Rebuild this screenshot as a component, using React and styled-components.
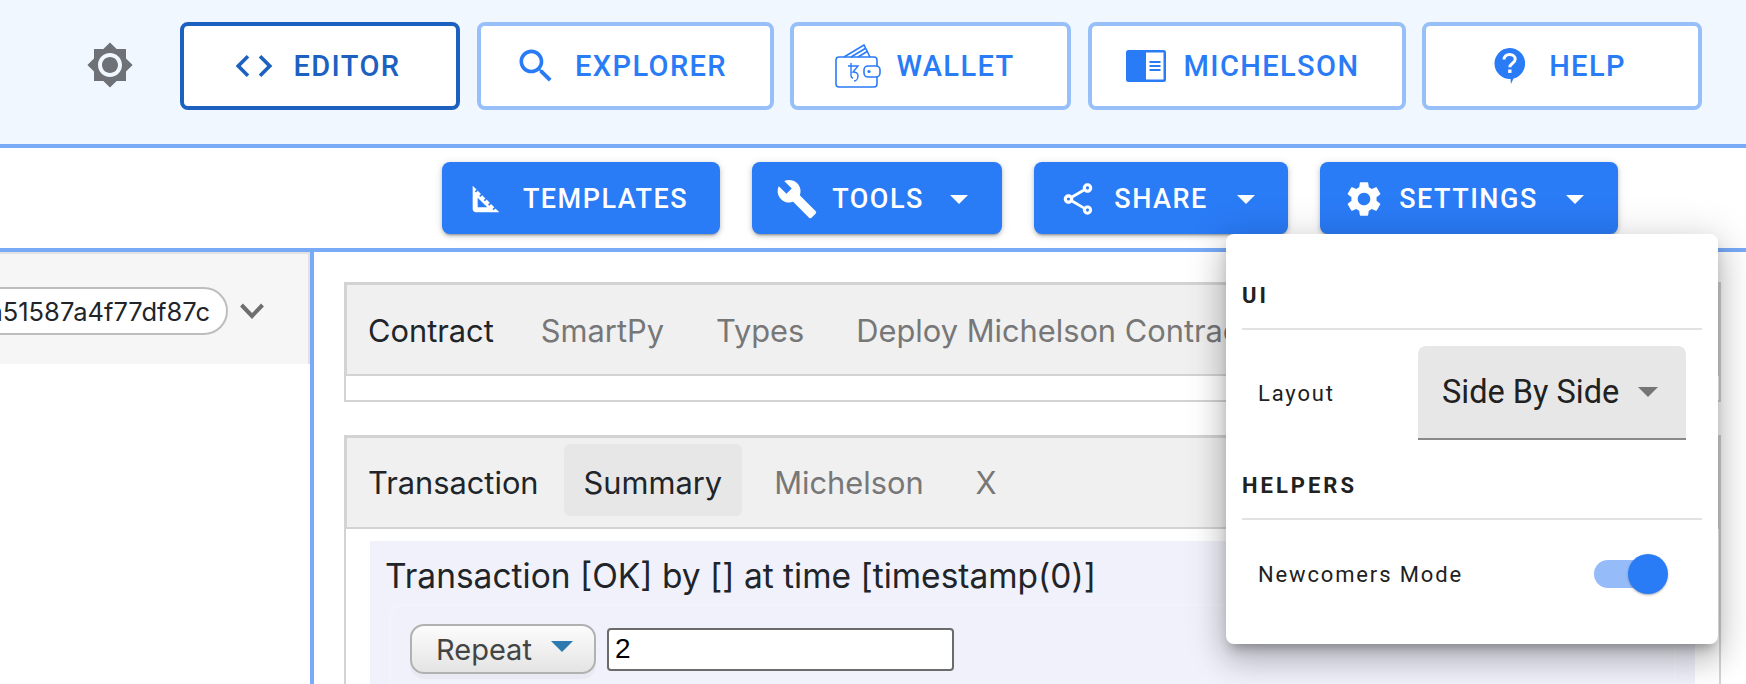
import React from "react";
import styled, { createGlobalStyle } from "styled-components";

const GlobalStyle = createGlobalStyle`
  html, body {
    margin: 0;
    height: 100%;
    overflow: hidden;
    background: #fff;
    font-family: Roboto, "Liberation Sans", sans-serif;
  }
  #root { height: 100%; }
`;

const Page = styled.div`
  height: 684px;
  overflow: hidden;
  display: flex;
  flex-direction: column;
`;

/* top nav */
const Header = styled.header`
  flex: none;
  height: 148px;
  box-sizing: border-box;
  display: flex;
  align-items: flex-start;
  justify-content: flex-end;
  gap: 16.5px;
  padding: 22px 44px 0 0;
  background: #f0f7ff;
  border-bottom: 4px solid #78aaf7;
`;

const ThemeToggle = styled.span`
  display: flex;
  margin: 19px 30px 0 0;
  color: #6e7175;
`;

const NavButton = styled.a`
  width: ${(p) => p.$w}px;
  height: 88px;
  box-sizing: border-box;
  display: flex;
  align-items: center;
  justify-content: center;
  gap: ${(p) => p.$gap || 18}px;
  padding-right: ${(p) => p.$shift || 8}px;
  background: #fff;
  border: 4px solid ${(p) => (p.$active ? "#1c60c0" : "#98c0f8")};
  border-radius: 8px;
  color: ${(p) => (p.$active ? "#1c60c0" : "#2a7bf6")};
  font-size: 29px;
  font-weight: 500;
  letter-spacing: 1.4px;
`;

/* second row */
const Toolbar = styled.div`
  flex: none;
  height: 100px;
  box-sizing: border-box;
  display: flex;
  justify-content: flex-end;
  align-items: flex-start;
  gap: 32px;
  padding: 14px 128px 0 0;
`;

const ToolWrap = styled.div`
  position: relative;
`;

const ToolButton = styled.button`
  width: ${(p) => p.$w}px;
  height: 72px;
  display: flex;
  align-items: center;
  justify-content: center;
  gap: ${(p) => p.$gap || 14}px;
  padding: 2px ${(p) => p.$shift || 10}px 0 0;
  border: 0;
  border-radius: 8px;
  background: #2a7bf6;
  color: #fff;
  font-family: Roboto, sans-serif;
  font-size: 27px;
  font-weight: 500;
  letter-spacing: 1.5px;
  box-shadow: 0 3px 2px -2px rgba(0, 0, 0, 0.25), 0 2px 4px rgba(0, 0, 0, 0.2), 0 1px 10px rgba(0, 0, 0, 0.1);
`;

const Caret = styled.span`
  width: 0;
  height: 0;
  margin-left: ${(p) => p.$ml || 14}px;
  border-left: ${(p) => p.$size || 9}px solid transparent;
  border-right: ${(p) => p.$size || 9}px solid transparent;
  border-top: ${(p) => p.$size || 9}px solid ${(p) => p.$color || "#fff"};
`;

/* settings popover */
const Popover = styled.div`
  position: absolute;
  top: 100%;
  right: -100px;
  z-index: 10;
  width: 492px;
  height: 410px;
  box-sizing: border-box;
  padding: 47px 16px 0;
  background: #fff;
  border-radius: 8px;
  box-shadow: 0 8px 12px -5px rgba(0, 0, 0, 0.3), 0 16px 28px 2px rgba(0, 0, 0, 0.16), 0 6px 40px 5px rgba(0, 0, 0, 0.14);
`;

const PopHeading = styled.div`
  height: 30px;
  margin-top: ${(p) => p.$top || 0}px;
  line-height: 30px;
  padding-bottom: 17px;
  border-bottom: 2px solid #e2e2e2;
  box-sizing: content-box;
  color: #212121;
  font-size: 22px;
  font-weight: 700;
  letter-spacing: 3px;
`;

const PopRow = styled.div`
  display: flex;
  align-items: center;
  justify-content: space-between;
  padding: ${(p) => p.$pad};
  color: #212121;
  font-size: 22px;
  letter-spacing: 1.85px;
`;

const SelectBox = styled.div`
  width: 268px;
  height: 94px;
  box-sizing: border-box;
  display: flex;
  align-items: center;
  padding-left: 24px;
  background: #e7e7e7;
  border-bottom: 2px solid #8a8a8a;
  border-radius: 8px 8px 0 0;
  color: #212121;
  font-size: 32.5px;
  letter-spacing: 0;
`;

const SwitchTrack = styled.span`
  position: relative;
  display: block;
  width: 66px;
  height: 28px;
  margin-right: 42px;
  background: #95bcf9;
  border-radius: 14px;
`;

const SwitchThumb = styled.span`
  position: absolute;
  top: -6px;
  right: -8px;
  width: 40px;
  height: 40px;
  border-radius: 50%;
  background: #2a7bf6;
  box-shadow: 0 2px 2px -1px rgba(0, 0, 0, 0.2), 0 1px 3px rgba(0, 0, 0, 0.2);
`;

/* panes */
const Main = styled.div`
  flex: 1;
  min-height: 0;
  display: flex;
  border-top: 4px solid #78aaf7;
`;

const LeftPane = styled.aside`
  flex: none;
  width: 310px;
  border-right: 4px solid #78aaf7;
  overflow: hidden;
`;

const AccountBar = styled.div`
  height: 112px;
  box-sizing: border-box;
  display: flex;
  align-items: center;
  justify-content: flex-end;
  gap: 12px;
  padding: 4px 44px 0 0;
  background: #f6f6f6;
  border-top: 2px solid #e2e2e2;
  border-right: 2px solid #e2e2e2;
`;

const HashPill = styled.div`
  flex: none;
  height: 48px;
  box-sizing: border-box;
  display: flex;
  align-items: center;
  padding: 0 16px;
  background: #fff;
  border: 2px solid #bdbdbd;
  border-radius: 24px;
  color: #212529;
  font-family: Inter, sans-serif;
  font-size: 25.5px;
`;

const Chevron = styled.svg`
  flex: none;
`;

const RightPane = styled.main`
  flex: 1;
  min-width: 0;
  padding: 30px 25px 0 30px;
`;

const TabGroup = styled.section`
  margin-bottom: 33px;
  border: solid #d3d3d3;
  border-width: 0 2px 2px 2px;
`;

const TabBar = styled.div`
  height: 94px;
  box-sizing: border-box;
  display: flex;
  align-items: flex-start;
  gap: 12px;
  margin: 0 -2px;
  padding: ${(p) => (p.$tight ? 6 : 7)}px 0 0 1px;
  background: #f0f0f0;
  border: solid #d3d3d3;
  border-width: 3px 3px 2px 3px;

  & > :first-child {
    margin-right: ${(p) => (p.$tight ? -7 : -5)}px;
  }
`;

const Tab = styled.div`
  height: 72px;
  box-sizing: border-box;
  display: flex;
  align-items: center;
  padding: 4px 20px 0;
  border-radius: 6px;
  background: ${(p) => (p.$selected ? "#e7e7e7" : "transparent")};
  color: ${(p) => (p.$dim ? "#777" : "#212529")};
  font-family: Inter, sans-serif;
  font-size: 30.8px;
  white-space: nowrap;
`;

const EmptyBody = styled.div`
  height: 24px;
`;

const TabBody = styled.div`
  padding: 12px 24px 0;
`;

const SummaryPanel = styled.div`
  padding: 15px 19px 0 15px;
  background: #f0f1fa;
`;

const SummaryTitle = styled.div`
  height: 40px;
  line-height: 40px;
  margin-bottom: 8px;
  color: #212529;
  font-family: Inter, sans-serif;
  font-size: 33.5px;
  white-space: nowrap;
`;

const RepeatBox = styled.div`
  display: flex;
  align-items: center;
  gap: 11px;
  margin-left: 4px;
  padding: 18px 19px;
  border: 2px solid #f3f4f9;
  border-radius: 14px;
`;

const RepeatSelect = styled.div`
  width: 186px;
  height: 50px;
  box-sizing: border-box;
  display: flex;
  align-items: center;
  padding-left: 24px;
  gap: 19px;
  background: linear-gradient(#fcfcfc, #e4e4e4);
  border: 2px solid #b1b1b1;
  border-radius: 14px;
  box-shadow: 0 5px 0 rgba(0, 0, 0, 0.03);
  color: #444;
  font-family: Inter, sans-serif;
  font-size: 29px;
`;

const BlueCaret = styled.span`
  width: 0;
  height: 0;
  margin-top: -6px;
  border-left: 11px solid transparent;
  border-right: 11px solid transparent;
  border-top: 11px solid #2d7ab0;
`;

const RepeatInput = styled.input`
  width: 347px;
  height: 43px;
  box-sizing: border-box;
  padding: 0 6px;
  border: 2px solid #6b6b6b;
  border-radius: 4px;
  background: #fff;
  color: #000;
  font-family: "Liberation Sans", sans-serif;
  font-size: 28px;
`;

const MdIcon = ({ d, size }) => (
  <svg width={size} height={size} viewBox="0 0 24 24" fill="currentColor">
    <path d={d} />
  </svg>
);

const WalletIcon = () => (
  <svg width="46" height="44" viewBox="0 0 46 44" fill="none" stroke="currentColor" strokeWidth="1.6">
    <rect x="1" y="13" width="41" height="30" rx="3" fill="#fff" />
    <path d="M9 13 29 1l6 12M16 13 31 4M23 13l10-6" />
    <rect x="29" y="22" width="16" height="11" rx="4" fill="#fff" />
    <circle cx="34" cy="27.5" r="1.6" fill="currentColor" stroke="none" />
    <path d="M13 22h10l-5 6c4 0 5 2 5 4 0 3-2 5-4 5M16 19v12c0 2 1 3 2 3" strokeWidth="1.4" />
  </svg>
);

const BookIcon = () => (
  <svg width="40" height="32" viewBox="0 0 40 32">
    <rect x="0" y="0" width="40" height="32" rx="2.5" fill="currentColor" />
    <rect x="20" y="2.5" width="17.5" height="27" fill="#fff" />
    <path d="M23.5 11h11v2h-11zM23.5 15h11v2h-11zM23.5 19h11v2h-11z" fill="currentColor" />
  </svg>
);

const HelpIcon = () => (
  <svg width="31" height="36" viewBox="0 0 31 36">
    <path
      d="M15.5 0a15.5 15.5 0 0 1 4 30.5L17 36l-.5-5A15.5 15.5 0 0 1 15.5 0z"
      fill="currentColor"
    />
    <path
      d="M10 11.5c0-3 2.4-5 5.6-5s5.6 2 5.6 4.8c0 3.8-5.4 4-5.4 8"
      fill="none"
      stroke="#fff"
      strokeWidth="3"
    />
    <rect x="14.1" y="21.5" width="3.4" height="3.4" fill="#fff" />
  </svg>
);

const ICONS = {
  sun: "M20 8.69V4h-4.69L12 .69 8.69 4H4v4.69L.69 12 4 15.31V20h4.69L12 23.31 15.31 20H20v-4.69L23.31 12 20 8.69zM12 18c-3.31 0-6-2.69-6-6s2.69-6 6-6 6 2.69 6 6-2.69 6-6 6zm0-10c-2.21 0-4 1.79-4 4s1.79 4 4 4 4-1.79 4-4-1.79-4-4-4z",
  code: "M9.4 16.6L4.8 12l4.6-4.6L8 6l-6 6 6 6 1.4-1.4zm5.2 0l4.6-4.6-4.6-4.6L16 6l6 6-6 6-1.4-1.4z",
  search: "M15.5 14h-.79l-.28-.27C15.41 12.59 16 11.11 16 9.5 16 5.91 13.09 3 9.5 3S3 5.91 3 9.5 5.91 16 9.5 16c1.61 0 3.09-.59 4.23-1.57l.27.28v.79l5 4.99L20.49 19l-4.99-5zm-6 0C7.01 14 5 11.99 5 9.5S7.01 5 9.5 5 14 7.01 14 9.5 11.99 14 9.5 14z",
  square: "M17.66 17.66l-1.06 1.06-.71-.71 1.06-1.06-1.94-1.94-1.06 1.06-.71-.71 1.06-1.06-1.94-1.94-1.06 1.06-.71-.71 1.06-1.06L9.7 9.7l-1.06 1.06-.71-.71 1.06-1.06-1.94-1.94-1.06 1.06-.71-.71 1.06-1.06L4 4v14c0 1.1.9 2 2 2h14l-2.34-2.34zM7 17v-5.76L12.76 17H7z",
  build: "M22.7 19l-9.1-9.1c.9-2.3.4-5-1.5-6.9-2-2-5-2.4-7.4-1.3L9 6 6 9 1.6 4.7C.4 7.1.9 10.1 2.9 12.1c1.9 1.9 4.6 2.4 6.9 1.5l9.1 9.1c.4.4 1 .4 1.4 0l2.3-2.3c.5-.4.5-1.1.1-1.4z",
  share: "M18 16.08c-.76 0-1.44.3-1.96.77L8.91 12.7c.05-.23.09-.46.09-.7s-.04-.47-.09-.7l7.05-4.11c.54.5 1.25.81 2.04.81 1.66 0 3-1.34 3-3s-1.34-3-3-3-3 1.34-3 3c0 .24.04.47.09.7L8.04 9.81C7.5 9.31 6.79 9 6 9c-1.66 0-3 1.34-3 3s1.34 3 3 3c.79 0 1.5-.31 2.04-.81l7.12 4.16c-.05.21-.08.43-.08.65 0 1.61 1.31 2.92 2.92 2.92s2.92-1.31 2.92-2.92-1.31-2.92-2.92-2.92zM18 4c.55 0 1 .45 1 1s-.45 1-1 1-1-.45-1-1 .45-1 1-1zM6 13c-.55 0-1-.45-1-1s.45-1 1-1 1 .45 1 1-.45 1-1 1zm12 7.02c-.55 0-1-.45-1-1s.45-1 1-1 1 .45 1 1-.45 1-1 1z",
  gear: "M19.14 12.94c.04-.3.06-.61.06-.94 0-.32-.02-.64-.07-.94l2.03-1.58c.18-.14.23-.41.12-.61l-1.92-3.32c-.12-.22-.37-.29-.59-.22l-2.39.96c-.5-.38-1.03-.7-1.62-.94l-.36-2.54c-.04-.24-.24-.41-.48-.41h-3.84c-.24 0-.43.17-.47.41l-.36 2.54c-.59.24-1.13.57-1.62.94l-2.39-.96c-.22-.08-.47 0-.59.22L2.74 8.87c-.12.21-.08.47.12.61l2.03 1.58c-.05.3-.09.63-.09.94s.02.64.07.94l-2.03 1.58c-.18.14-.23.41-.12.61l1.92 3.32c.12.22.37.29.59.22l2.39-.96c.5.38 1.03.7 1.62.94l.36 2.54c.05.24.24.41.48.41h3.84c.24 0 .44-.17.47-.41l.36-2.54c.59-.24 1.13-.56 1.62-.94l2.39.96c.22.08.47 0 .59-.22l1.92-3.32c.12-.22.07-.47-.12-.61l-2.01-1.58zM12 15.6c-1.98 0-3.6-1.62-3.6-3.6s1.62-3.6 3.6-3.6 3.6 1.62 3.6 3.6-1.62 3.6-3.6 3.6z",
};

export default function App() {
  return (
    <Page>
      <GlobalStyle />
      <Header>
        <ThemeToggle>
          <MdIcon d={ICONS.sun} size={48} />
        </ThemeToggle>
        <NavButton $w={280} $active $gap={17} $shift={7}>
          <MdIcon d={ICONS.code} size={44} />
          EDITOR
        </NavButton>
        <NavButton $w={297} $gap={17} $shift={9}>
          <MdIcon d={ICONS.search} size={44} />
          EXPLORER
        </NavButton>
        <NavButton $w={281} $gap={15} $shift={11}>
          <WalletIcon />
          WALLET
        </NavButton>
        <NavButton $w={318} $shift={8}>
          <BookIcon />
          MICHELSON
        </NavButton>
        <NavButton $w={280} $gap={24} $shift={4}>
          <HelpIcon />
          HELP
        </NavButton>
      </Header>

      <Toolbar>
        <ToolButton $w={278} $gap={17} $shift={8}>
          <MdIcon d={ICONS.square} size={40} />
          TEMPLATES
        </ToolButton>
        <ToolButton $w={250} $gap={14} $shift={10}>
          <MdIcon d={ICONS.build} size={42} />
          TOOLS
          <Caret $ml={12} />
        </ToolButton>
        <ToolButton $w={254} $gap={17} $shift={8}>
          <MdIcon d={ICONS.share} size={38} />
          SHARE
          <Caret $ml={12} />
        </ToolButton>
        <ToolWrap>
          <ToolButton $w={298} $gap={14} $shift={11}>
            <MdIcon d={ICONS.gear} size={42} />
            SETTINGS
            <Caret />
          </ToolButton>
          <Popover>
            <PopHeading>UI</PopHeading>
            <PopRow $pad="16px 16px 0 16px">
              Layout
              <SelectBox>
                Side By Side
                <Caret $color="#757575" $ml={19} $size={10} />
              </SelectBox>
            </PopRow>
            <PopHeading $top={31}>HELPERS</PopHeading>
            <PopRow $pad="40px 0 0 16px">
              Newcomers Mode
              <SwitchTrack>
                <SwitchThumb />
              </SwitchTrack>
            </PopRow>
          </Popover>
        </ToolWrap>
      </Toolbar>

      <Main>
        <LeftPane>
          <AccountBar>
            <HashPill>a51587a4f77df87c</HashPill>
            <Chevron width="24" height="16" viewBox="0 0 24 16" fill="none" stroke="#6f6f6f" strokeWidth="4">
              <path d="M1.5 2 12 13 22.5 2" />
            </Chevron>
          </AccountBar>
        </LeftPane>
        <RightPane>
          <TabGroup>
            <TabBar>
              <Tab>Contract</Tab>
              <Tab $dim>SmartPy</Tab>
              <Tab $dim>Types</Tab>
              <Tab $dim>Deploy Michelson Contract</Tab>
            </TabBar>
            <EmptyBody />
          </TabGroup>
          <TabGroup>
            <TabBar $tight>
              <Tab>Transaction</Tab>
              <Tab $selected>Summary</Tab>
              <Tab $dim>Michelson</Tab>
              <Tab $dim>X</Tab>
            </TabBar>
            <TabBody>
              <SummaryPanel>
                <SummaryTitle>Transaction [OK] by [] at time [timestamp(0)]</SummaryTitle>
                <RepeatBox>
                  <RepeatSelect>
                    Repeat
                    <BlueCaret />
                  </RepeatSelect>
                  <RepeatInput defaultValue="2" />
                </RepeatBox>
              </SummaryPanel>
            </TabBody>
          </TabGroup>
        </RightPane>
      </Main>
    </Page>
  );
}
